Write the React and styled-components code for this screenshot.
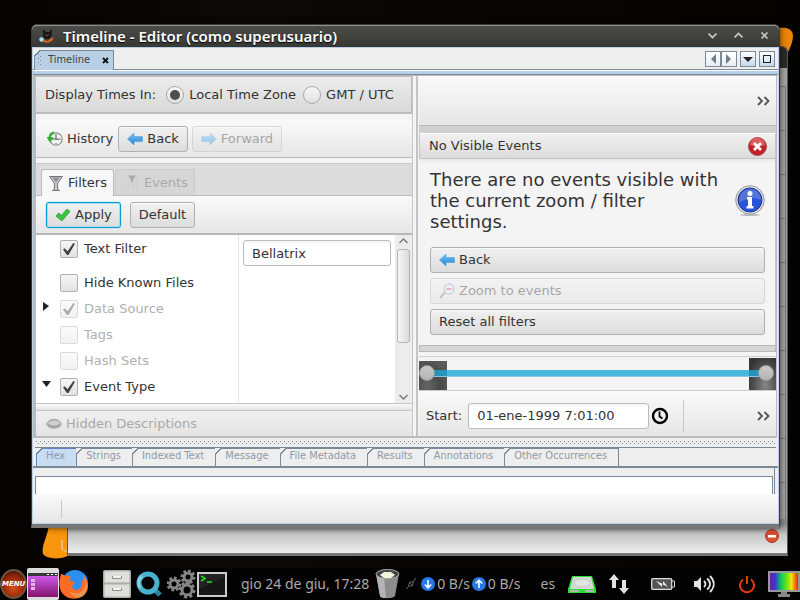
import React from "react";
import styled, { createGlobalStyle, css } from "styled-components";

const SANS = '"DejaVu Sans", sans-serif';
const CONDENSED = '"DejaVu Sans Condensed", "DejaVu Sans", sans-serif';
const HUMANIST = '"Noto Sans", "Open Sans", sans-serif';
const SLATE = "#7a8a99";

const GlobalStyle = createGlobalStyle`
  *, *::before, *::after { box-sizing: border-box; }
  body { margin: 0; background: #080504; }
  button, input { font: inherit; color: inherit; margin: 0; padding: 0; }
  button { border: 0; background: none; }
  svg { display: block; flex: none; }
`;

/* ---------- desktop ---------- */
const Desktop = styled.div`
  position: relative;
  display: flex;
  flex-direction: column;
  min-height: 100vh;
  overflow: hidden;
  background: linear-gradient(90deg, #060403, #0c0806 30%, #080504 70%, #050302);
  color: #333;
  font: 13px/16px ${SANS};
`;
const Workspace = styled.div`
  flex: 1;
  padding: 24px 20px 40px 31px;
`;
const Wallpaper = styled.svg`
  position: absolute;
  ${(p) => p.$place}
`;
const BackWindow = styled.div`
  position: absolute;
  top: 46px;
  bottom: 44px;
  left: 67px;
  right: 12px;
  display: flex;
  flex-direction: column;
  border: 1px solid #555;
  border-bottom: 3px solid #777;
  border-radius: 6px 6px 0 0;
  background: #a3a3a5;
`;
const BackTitle = styled.div`
  height: 21px;
  border-radius: 5px 5px 0 0;
  background: #292928;
`;
const BackBody = styled.div`
  flex: 1;
  margin: 18px 1px 0 0;
  border: 1px solid #77777a;
  border-width: 1px 1px 0 0;
  background: repeating-linear-gradient(#a3a3a5 0 43px, #77777a 43px 44px);
`;
const BackStatus = styled.div`
  display: flex;
  align-items: center;
  justify-content: flex-end;
  height: 34px;
  padding: 0 8px 0 0;
  background: linear-gradient(#888 15%, #c4c4c4 45%, #efefef);
`;

/* ---------- window ---------- */
const Window = styled.main`
  position: relative;
  display: flex;
  flex-direction: column;
  border: 1px solid #3b3b39;
  border-bottom: 4px solid #777;
  border-radius: 6px 6px 0 0;
  background: #eee;
  box-shadow: 0 0 6px #000a;
`;
const TitleBar = styled.header`
  display: flex;
  align-items: center;
  height: 22px;
  padding: 0 6px 2px 7px;
  gap: 8px;
  border-top: 1px solid #8f8f8b;
  border-radius: 5px 5px 0 0;
  background: linear-gradient(#4b4b48, #373734);
  h1 {
    flex: 1;
    margin: 0;
    color: #fff;
    font: 600 15px/18px ${HUMANIST};
    text-shadow: 0 1px 1px #000;
  }
`;
const WindowButton = styled.button`
  display: grid;
  place-items: center;
  width: 18px;
  height: 18px;
`;
const WindowButtons = styled.div`
  display: flex;
  gap: 8px;
`;
const Frame = styled.div`
  border: 1px solid #b8cfe5;
`;
const DocTabs = styled.div`
  display: flex;
  align-items: flex-end;
  justify-content: space-between;
  height: 22px;
  padding-left: 1px;
  border-bottom: 1px solid ${SLATE};
`;
const cutCorner = css`
  position: relative;
  &::before {
    content: "";
    position: absolute;
    top: -1px;
    left: -1px;
    width: 6px;
    height: 6px;
    background: linear-gradient(135deg, #eee 45%, ${(p) => (p.$active ? "#6382bf" : SLATE)} 45% 60%, transparent 60%);
  }
`;
const DocTab = styled.div`
  ${cutCorner}
  display: flex;
  align-items: center;
  gap: 12px;
  height: 20px;
  margin-bottom: -1px;
  padding: 0 4px 1px 3px;
  border: 1px solid ${SLATE};
  border-bottom: 0;
  background: #b8cfe5;
  font: 11px/18px ${CONDENSED};
  color: #444;
  button { display: grid; }
`;
const Grip = styled.i`
  width: 4px;
  height: 12px;
  margin-right: -6px;
  background:
    conic-gradient(from 270deg at 1px 1px, #7088a0 90deg, transparent 0) 0 0 / 4px 4px,
    conic-gradient(from 270deg at 1px 1px, #7088a0 90deg, transparent 0) 2px 2px / 4px 4px;
`;
const DocNav = styled.div`
  display: flex;
  height: 18px;
  padding-right: 3px;
`;
const NavButton = styled.button`
  display: grid;
  place-items: center;
  width: 16px;
  height: 16px;
  border: 1px solid ${SLATE};
  background: linear-gradient(#fff, ${(p) => (p.$lit ? "#c3d8ee" : "#e9edf1")});
  margin-left: ${(p) => (p.$spaced ? 3 : 0)}px;
`;
const BlueRule = styled.div`
  height: 5px;
  border-top: 1px solid #fff;
  border-bottom: 1px solid ${SLATE};
  background: #b8cfe5;
`;
const Body = styled.div`
  display: grid;
  grid-template-columns: 376fr 6px 358fr;
  margin-right: 1px;
  border: 1px solid #bbb;
  border-width: 1px 1px 2px 3px;
  background: #f4f4f4;
`;
const Divider = styled.div`
  border: 1px solid #c4c4c4;
  border-width: 0 2px 0 1px;
  background: #f5f5f5;
`;
const Column = styled.section`
  display: flex;
  flex-direction: column;
  min-width: 0;
  padding-left: ${(p) => (p.$inset ? 1 : 0)}px;
`;
const Bar = styled.div`
  display: flex;
  align-items: center;
  height: ${(p) => p.$h || 38}px;
  padding: 0 ${(p) => p.$right || 10}px 0 10px;
  gap: ${(p) => p.$gap || 0}px;
  border-bottom: 1px solid #b8b8b8;
  background: linear-gradient(#fafafa, #e6e6e6);
`;
const TimesBar = styled.div`
  display: flex;
  align-items: center;
  height: 38px;
  margin: 0 0 6px;
  padding: 0 9px;
  border: 1px solid #bdbdbd;
  border-width: 1px 1px 2px 0;
  background: linear-gradient(#ececec, #d9d9d9);
`;
const TimesLabel = styled.span`
  margin-right: 10px;
`;
const RadioLabel = styled.label`
  display: flex;
  align-items: center;
  gap: 5px;
  margin-right: 7px;
`;
const Radio = styled.input.attrs({ type: "radio" })`
  appearance: none;
  display: grid;
  place-items: center;
  width: 18px;
  height: 18px;
  border: 1px solid #a8a8a8;
  border-radius: 50%;
  background: linear-gradient(#f8f8f8, #e0e0e0);
  &:checked::before {
    content: "";
    width: 10px;
    height: 10px;
    border-radius: 50%;
    background: #4d4d4d;
  }
`;
const Check = styled.input.attrs({ type: "checkbox" })`
  appearance: none;
  display: grid;
  place-items: center;
  width: 18px;
  height: 18px;
  border: 1px solid #b0b0b0;
  border-radius: 2px;
  background: linear-gradient(#f6f6f6, #e2e2e2);
  &:checked::before {
    content: "";
    width: 12px;
    height: 12px;
    background: #444;
    clip-path: polygon(0 55%, 14% 43%, 38% 68%, 86% 0, 100% 6%, 46% 100%, 33% 100%);
  }
  &:disabled { opacity: 0.45; }
`;
const Button = styled.button`
  display: flex;
  align-items: center;
  justify-content: flex-start;
  gap: 4px;
  height: 26px;
  padding: 0 8px;
  border: 1px solid #b0b0b0;
  border-radius: 3px;
  background: linear-gradient(#f1f1f1, #dcdcdc);
  box-shadow: inset 0 1px #fafafa;
  white-space: nowrap;
  &:disabled { opacity: 0.4; }
  ${(p) =>
    p.$focused &&
    css`
      border-color: #039ed3;
      box-shadow: inset 0 0 0 1px #a5dcf0, 0 0 1px #039ed3;
    `}
`;
const HistoryLabel = styled.span`
  display: flex;
  align-items: center;
  gap: 4px;
  margin-left: 1px;
  margin-right: 1px;
`;
const FilterTabs = styled.div`
  display: flex;
  align-items: flex-end;
  height: 33px;
  margin-top: 5px;
  padding-left: 5px;
  gap: 1px;
  border-top: 1px solid #c8c8c8;
  border-bottom: 1px solid #bdbdbd;
  background: #dcdcdc;
`;
const FilterTab = styled.button`
  display: flex;
  align-items: center;
  gap: 5px;
  height: ${(p) => (p.disabled ? 26 : 27)}px;
  margin-bottom: ${(p) => (p.disabled ? 0 : -1)}px;
  padding: 0 6px 0 7px;
  border: 1px solid #bbb;
  border-bottom: 0;
  border-radius: 3px 3px 0 0;
  background: ${(p) => (p.disabled ? "#d2d2d2" : "#f7f7f7")};
  &:disabled { opacity: 0.5; color: #777; }
`;
const FilterArea = styled.div`
  display: grid;
  grid-template-columns: 203fr 156fr 17px;
  height: 169px;
  border-top: 1px solid #b8b8b8;
  background: #fff;
`;
const FilterList = styled.ul`
  margin: 0;
  padding: 1px 0 0 6px;
  border-right: 1px solid #e6e6e6;
  list-style: none;
`;
const FilterRow = styled.li`
  display: grid;
  grid-template-columns: 18px 1fr;
  align-items: center;
  height: 26px;
  &:first-child { margin-bottom: 8px; }
  label {
    display: flex;
    align-items: center;
    gap: 6px;
    color: ${(p) => (p.$off ? "#b0b0b0" : "#333")};
  }
`;
const Disclosure = styled.button`
  display: grid;
  width: 10px;
  padding-bottom: 4px;
`;
const FilterValue = styled.div`
  padding: 5px 4px;
`;
const TextBox = styled.input`
  width: ${(p) => p.$w || "100%"};
  min-width: 0;
  height: 26px;
  padding: 0 8px;
  border: 1px solid #bcbcbc;
  border-radius: 3px;
  background: linear-gradient(#f3f3f3, #fff 4px);
`;
const ScrollBar = styled.div`
  display: flex;
  flex-direction: column;
  align-items: center;
  justify-content: space-between;
  padding: 3px 1px;
  background: #ececec;
`;
const ScrollThumb = styled.div`
  width: 13px;
  height: 94px;
  margin: 5px 0 auto;
  border: 1px solid #b5b5b5;
  border-radius: 3px;
  background: linear-gradient(90deg, #f5f5f5, #dadada);
`;
const HSplit = styled.div`
  height: 8px;
  border-top: 1px solid #c4c4c4;
  border-bottom: 1px solid #c4c4c4;
  background: linear-gradient(#fafafa, #e4e4e4);
`;
const HiddenBar = styled.div`
  display: flex;
  align-items: center;
  gap: 4px;
  flex: 1;
  min-height: 25px;
  padding-left: 10px;
  background: linear-gradient(#f0f0f0, #e4e4e4);
  color: #a8a8a8;
`;
const Overflow = styled.button`
  display: grid;
  margin-left: auto;
`;
const TimeButton = styled.button`
  display: grid;
  margin-left: 2px;
`;
const NoticeArea = styled.div`
  padding-top: 7px;
  background: #d0d0d0;
`;
const NoticeHead = styled.div`
  display: flex;
  align-items: center;
  justify-content: space-between;
  height: 26px;
  padding: 0 8px 0 9px;
  border: 1px solid #c4c4c4;
  border-top-color: #fff;
  background: linear-gradient(#f1f1f1, #dcdcdc);
`;
const NoticeBody = styled.div`
  display: flex;
  flex-direction: column;
  gap: 5px;
  min-height: 186px;
  padding: 10px 10px 10px 11px;
  border-right: 1px solid #c4c4c4;
  background: linear-gradient(#e9e9e9, #f4f4f4 5px);
`;
const NoticeText = styled.div`
  display: flex;
  align-items: center;
  justify-content: space-between;
  padding-bottom: 10px;
  p {
    max-width: 292px;
    margin: 0;
    font-size: 18px;
    line-height: 21px;
  }
`;
const NoticeFoot = styled.div`
  height: 7px;
  border: 1px solid #b8b8b8;
  background: #d6d6d6;
`;
const RangeArea = styled.div`
  display: grid;
  grid-template-columns: 28px 1fr 27px;
  grid-template-rows: 32px;
  align-items: end;
  margin-top: 4px;
  padding-top: 1px;
  border-top: 1px solid #d0d0d0;
  background: #f4f4f4;
`;
const RangeShade = styled.div`
  height: ${(p) => (p.$tall ? 32 : 29)}px;
  grid-column: ${(p) => (p.$tall ? 3 : 1)};
  grid-row: 1;
  background: ${(p) =>
    p.$tall
      ? "radial-gradient(ellipse at 60% 85%, #888, #555 45%, transparent 80%), #343434"
      : "radial-gradient(ellipse at 30% 85%, #666, #484848 45%, transparent 80%), #5a5a5a"};
`;
const RangeTrack = styled.div`
  grid-column: 1 / -1;
  grid-row: 1;
  align-self: center;
  height: 7px;
  margin: 0 17px 2px 14px;
  border-bottom: 1px solid #8bc6dc;
  background: #1ca8d8cc;
`;
const RangeInput = styled.input.attrs({ type: "range" })`
  appearance: none;
  grid-column: 1 / -1;
  grid-row: 1;
  align-self: center;
  width: 100%;
  height: 16px;
  margin-bottom: 2px;
  padding-right: 2px;
  background: none;
  pointer-events: none;
  &::-webkit-slider-thumb {
    appearance: none;
    width: 16px;
    height: 16px;
    border: 1px solid #999;
    border-radius: 50%;
    background: linear-gradient(#c9c9c9, #b4b4b4);
    pointer-events: auto;
  }
`;
const StartBar = styled(Bar)`
  flex: 1;
  min-height: 46px;
  padding: 4px 6px 0 7px;
  border-top: 1px solid #ccc;
  border-bottom: 0;
  label { margin-right: 6px; }
`;
const Separator = styled.i`
  width: 1px;
  height: ${(p) => p.$h}px;
  margin-left: ${(p) => p.$left}px;
  background: #c8c8c8;
`;
const DotRule = styled.div`
  height: 10px;
  margin: 0 2px;
  padding: 3px 1px 2px;
  border-bottom: 1px solid ${SLATE};
  background:
    conic-gradient(from 270deg at 1px 1px, #7f8a94 90deg, transparent 0) 0 0 / 4px 4px content-box,
    conic-gradient(from 270deg at 1px 1px, #7f8a94 90deg, transparent 0) 2px 2px / 4px 4px content-box;
`;
const ContentTabs = styled.div`
  display: flex;
  align-items: flex-end;
  height: 20px;
  padding-left: 3px;
  border-bottom: 2px solid ${SLATE};
`;
const ContentTab = styled.button`
  ${cutCorner}
  height: 18px;
  margin-right: -1px;
  padding: 0 11px 3px 9px;
  border: 1px solid ${(p) => (p.$active ? "#6382bf" : SLATE)};
  border-bottom: 0;
  background: ${(p) => (p.$active ? "#c8ddf2" : "#eee")};
  color: #8e9aa6;
  font: 11px/14px ${CONDENSED};
`;
const ContentPane = styled.div`
  height: 26px;
  margin: 0 3px 0 2px;
  padding-top: 8px;
  border-right: 1px solid ${SLATE};
  background: #eee;
  &::after {
    content: "";
    display: block;
    height: 18px;
    border: 1px solid ${SLATE};
    border-bottom: 0;
    background: #fff;
    margin-right: 1px;
  }
`;
const StatusStrip = styled.div`
  display: flex;
  align-items: center;
  height: 29px;
  background: linear-gradient(#fafafa, #e6e6e6);
`;

/* ---------- taskbar ---------- */
const Taskbar = styled.footer`
  position: relative;
  display: flex;
  align-items: center;
  height: 32px;
  background: #030202;
  color: #aaa;
  font: 14px/20px ${HUMANIST};
  white-space: nowrap;
  overflow: hidden;
`;
const Group = styled.div`
  display: flex;
  align-items: center;
  gap: ${(p) => p.$gap || 0}px;
  margin-left: ${(p) => p.$left || 0}px;
`;
const Launcher = styled.button`
  display: grid;
`;

/* ---------- icons ---------- */
const Arrow = ({ flip }) => (
  <svg width="16" height="16" viewBox="0 0 16 16">
    <defs>
      <linearGradient id="arrowFill" x1="0" y1="0" x2="0" y2="1">
        <stop offset="0" stopColor="#7cc3f2" />
        <stop offset="1" stopColor="#1d83d3" />
      </linearGradient>
    </defs>
    <path
      transform={flip ? "translate(16 0) scale(-1 1)" : undefined}
      d="M.5 8 7 2v3.6h8.5v5H7V14z"
      fill="url(#arrowFill)"
      stroke="#4ba0dc"
      strokeWidth=".6"
    />
  </svg>
);
const HistoryIcon = () => (
  <svg width="16" height="16" viewBox="0 0 16 16">
    <circle cx="9" cy="8" r="6.2" fill="#f1f4f1" stroke="#8c948c" strokeWidth="1.2" />
    <path d="M9 3v5.2h4.5M9 12v1M4.5 8H9" stroke="#555" fill="none" />
    <path d="M7 1.5C4 2 2.700 4 2.600 7" stroke="#2fb52f" strokeWidth="2.200" fill="none" />
    <path d="M0 6.500h6L3.200 11z" fill="#22c322" stroke="#168a16" strokeWidth=".5" />
  </svg>
);
const FunnelIcon = () => (
  <svg width="14" height="16" viewBox="0 0 14 16">
    <path d="M.5 1.500h13L8.600 8v6.500l1.900 1h-7l1.900-1V8z" fill="#c9c9cf" stroke="#73737a" />
    <path d="M3 2.500h8L7 7z" fill="#8d8d94" />
  </svg>
);
const EventsIcon = () => (
  <svg width="16" height="16" viewBox="0 0 16 16">
    <path d="M1.500 7.500v7h2v-7zM5.500 5.500v9h2v-9zM9.500 7.500v7h1v-7zM13 3.500v11h1.500v-11z" fill="#ddd" stroke="#c4c4c4" />
    <path d="M5 .5h8L10 5v2H8V5z" fill="#777" />
  </svg>
);
const TickIcon = () => (
  <svg width="16" height="14" viewBox="0 0 16 14">
    <path d="M1 8l3-3 2.500 2.500L12 1l3 2.500L6.800 13z" fill="#3bc53b" stroke="#1c8f2a" strokeWidth=".7" />
  </svg>
);
const MagnifierIcon = () => (
  <svg width="16" height="16" viewBox="0 0 16 16">
    <path d="M1 15l5-5.500" stroke="#888" strokeWidth="2.500" />
    <circle cx="10" cy="6" r="5" fill="#dfe8f8" stroke="#7182b8" />
    <path d="M7.500 6h5" stroke="#d23" strokeWidth="1.500" />
  </svg>
);
const CloseBadge = () => (
  <svg width="19" height="19" viewBox="0 0 19 19">
    <circle cx="9.500" cy="9.500" r="9" fill="#c2202b" stroke="#a84a50" />
    <path d="M2 8a7.500 7.500 0 0 1 15 0c-4 2-10 2-15 0z" fill="#db5a5f" />
    <path d="M6 6l7 7M13 6l-7 7" stroke="#fff" strokeWidth="2.800" />
  </svg>
);
const InfoBadge = () => (
  <svg width="30" height="31" viewBox="0 0 30 31">
    <ellipse cx="15" cy="30" rx="10" ry="1" fill="#bbb" />
    <circle cx="15" cy="15" r="14.300" fill="#dedede" stroke="#9a9a9a" />
    <circle cx="15" cy="15" r="12" fill="#2854d8" stroke="#173a9c" />
    <path d="M4 15a11 11 0 0 1 22 0c-7-3-15-2-22 3z" fill="#5674d6" />
    <path d="M12 12h5v9h1.500v2.500h-7V21H13v-6.500h-1z" fill="#fff" />
    <circle cx="15" cy="8.500" r="2.500" fill="#fff" />
  </svg>
);
const Chevrons = () => (
  <svg width="13" height="10" viewBox="0 0 13 10" fill="none" stroke="#555" strokeWidth="1.800">
    <path d="M1 1l4 4-4 4M7.500 1l4 4-4 4" />
  </svg>
);
const ClockIcon = () => (
  <svg width="18" height="18" viewBox="0 0 18 18" fill="none" stroke="#000">
    <circle cx="9" cy="9" r="7" strokeWidth="2.400" />
    <path d="M8.500 4.500V9.500l3 2" strokeWidth="1.800" />
  </svg>
);
const EyeIcon = () => (
  <svg width="16" height="12" viewBox="0 0 16 12">
    <path d="M0 6C3-1 13-1 16 6 13 12.500 3 12.500 0 6z" fill="#b0b0b0" />
    <path d="M2 5c3-3 9-3 12 0-3 3-9 3-12 0z" fill="#cfcfcf" />
    <path d="M2 7c3 2.500 9 2.500 12 0" stroke="#999" fill="none" />
  </svg>
);
const SmallChevron = ({ up }) => (
  <svg width="9" height="6" viewBox="0 0 9 6" fill="none" stroke="#777" strokeWidth="1.400">
    <path d={up ? "M.5 5 4.500 1l4 4" : "M.5 1l4 4 4-4"} />
  </svg>
);
const TitleGlyph = ({ d }) => (
  <svg width="9" height="9" viewBox="0 0 9 9" fill="none" stroke="#c8c8c4" strokeWidth="1.700">
    <path d={d} />
  </svg>
);
const DogIcon = () => (
  <svg width="16" height="16" viewBox="0 0 16 16">
    <path d="M4 1l3 3h3l3-3-.5 7-2.500 3H6L4 8z" fill="#15171b" />
    <path d="M5 11l3 2 4-3 3-1-2 4-4 2-5-1z" fill="#c8651b" />
    <path d="M6 6l2 2 2-2" stroke="#8a4b22" fill="none" />
    <circle cx="2.500" cy="11.500" r="2.200" fill="#a9e2ee" />
  </svg>
);
const CloseX = () => (
  <svg width="7" height="7" viewBox="0 0 7 7" stroke="#111" strokeWidth="1.800">
    <path d="M1 1l5 5M6 1 1 6" />
  </svg>
);
const Solid = ({ d, fill, w = 10, h = 10 }) => (
  <svg width={w} height={h} viewBox={`0 0 ${w} ${h}`}>
    <path d={d} fill={fill} fillRule="evenodd" />
  </svg>
);

const MenuBadge = styled.span`
  display: grid;
  place-items: center;
  width: 27px;
  height: 30px;
  border: 2px solid #6b5543;
  border-radius: 50%;
  background: radial-gradient(circle at 50% 65%, #d84c12, #8a2407 60%, #2a1008);
  color: #fff;
  font: italic 700 7px/10px ${SANS};
`;
const PurpleWindow = () => (
  <svg width="32" height="32" viewBox="0 0 32 32">
    <defs>
      <linearGradient id="purple" x1="0" y1="0" x2="0" y2="1">
        <stop offset="0" stopColor="#cc5ae8" />
        <stop offset="1" stopColor="#83146d" />
      </linearGradient>
    </defs>
    <rect width="32" height="32" rx="2" fill="#ddd" />
    <path d="M1 5h30v3H1z" fill="#383838" />
    <path d="M20 6h2v1h-2zM24 6h2v1h-2zM28 6h2v1h-2z" fill="#fff" />
    <path d="M1 8h30v21H1z" fill="url(#purple)" />
    <path d="M4 11h4v3H4zM4 15h4v3H4zM4 19h4v3H4z" fill="#e4b4e8" />
  </svg>
);
const Fox = () => (
  <svg width="30" height="30" viewBox="0 0 30 30">
    <circle cx="16" cy="14" r="13" fill="#2c8ff0" />
    <path d="M2 5c2 0 3 1 4 2 3-1 5 0 6 1-2 1-2 3 0 4l4 1c0 2-3 3-3 5 1 4 8 3 9 0 1-3 0-5 2-7V6c6 6 7 15 1 20-6 5-16 5-21-1-5-6-4-13-2-20z" fill="#ff6a26" />
    <path d="M24 6c4 6 3 13-2 17-5 3-9 1-11-1 1 6 9 9 14 4 5-6 3-15-1-20z" fill="#e99552" />
  </svg>
);
const Cabinet = () => (
  <svg width="28" height="28" viewBox="0 0 28 28">
    <rect width="28" height="28" rx="2" fill="#a8a8a5" />
    <path d="M1 1h26v12H1zM1 14h26v13H1z" fill="#dededb" stroke="#aaaaa7" />
    <path d="M9 6h10v3H9zM9 18h10v3H9z" fill="#f4f4f2" />
    <path d="M9.500 6v2.500h9V6M9.500 18v2.500h9V18" fill="none" stroke="#888" />
  </svg>
);
const SearchQ = () => (
  <svg width="26" height="26" viewBox="0 0 26 26">
    <path d="M18 18l6 6" stroke="#28839d" strokeWidth="5" />
    <circle cx="12" cy="12" r="9" fill="none" stroke="#49b1ce" strokeWidth="5" />
    <path d="M4 17a9 9 0 0 1 2-12" fill="none" stroke="#86cfe0" strokeWidth="3" />
  </svg>
);
const Gears = () => (
  <svg width="30" height="30" viewBox="0 0 30 30" fill="none" stroke="#858585">
    {[[7, 15, 4], [21, 8, 4], [20, 21, 5]].map(([x, y, r]) => (
      <g key={`${x}-${y}`}>
        <circle cx={x} cy={y} r={r} strokeWidth="3" />
        <circle cx={x} cy={y} r={r + 2} strokeWidth="3" pathLength="32" strokeDasharray="2.200 1.800" />
      </g>
    ))}
  </svg>
);
const Terminal = () => (
  <svg width="30" height="25" viewBox="0 0 30 25">
    <path d="M1 1h28v23H1z" fill="#222" stroke="#ccc" strokeWidth="2" />
    <path d="M2 17 28 5v18H2z" fill="#161616" />
    <path d="M4 4l4 2.500L4 9M10 10h5" stroke="#20dd20" strokeWidth="1.700" fill="none" />
  </svg>
);
const Bin = () => (
  <svg width="25" height="30" viewBox="0 0 25 30">
    <path d="M1 5l4 22c2 3 13 3 15 0l4-22z" fill="#8c8c8c" />
    <path d="M1 5l4 22c1 2 4 2 6 2L9 8z" fill="#b4b4b4" />
    <ellipse cx="12.500" cy="5" rx="11.500" ry="4.500" fill="#444" stroke="#aaa" />
    <path d="M5 6l4-3 7 0 4 3-4 3H9z" fill="#f6f4df" />
  </svg>
);
const Plug = () => (
  <svg width="10" height="12" viewBox="0 0 10 12" stroke="#666" fill="none">
    <path d="M0 11l3-3M7 4l3-4M3 4l4 4M3 8c-1-3 2-5 4-4 1 3-2 5-4 4z" />
  </svg>
);
const NetArrow = ({ up }) => (
  <svg width="14" height="14" viewBox="0 0 14 14">
    <circle cx="7" cy="7" r="7" fill="#2579e8" />
    <path d={up ? "M7 11V3.500M3.800 6.500 7 3.200l3.200 3.300" : "M7 3v7.500M3.800 7.500 7 10.800l3.200-3.300"} stroke="#fff" strokeWidth="1.600" fill="none" />
  </svg>
);
const Drive = () => (
  <svg width="30" height="19" viewBox="0 0 30 19">
    <path d="M5 1h20l4 13v4H1v-4z" fill="#2bdc35" />
    <path d="M6 2h18l3 12H3z" fill="#d5d8d5" />
    <ellipse cx="15" cy="8" rx="8" ry="4" fill="#e2e4e2" stroke="#c6c8c6" />
    <path d="M3 15h9v2H3zM18 15h9v2h-9z" fill="#aeb8ae" />
  </svg>
);
const Battery = () => (
  <svg width="24" height="12" viewBox="0 0 24 12">
    <rect x=".7" y=".7" width="20" height="10.600" rx="1" fill="#555" stroke="#ddd" strokeWidth="1.300" />
    <path d="M21 3h2.500v6H21" fill="none" stroke="#ddd" />
    <path d="M5 3l7 3V3l5 6-6-3v3z" fill="#eee" />
  </svg>
);
const Speaker = () => (
  <svg width="21" height="18" viewBox="0 0 21 18" fill="none" stroke="#e4e4e4" strokeWidth="1.800">
    <path d="M0 6h3l4-4v14l-4-4H0z" fill="#e4e4e4" stroke="none" />
    <path d="M10 6c2 2 2 4 0 6M13 3.500c4 3 4 8 0 11M16 1c5 5 5 11 0 16" />
  </svg>
);
const Power = () => (
  <svg width="16" height="17" viewBox="0 0 16 17" fill="none" stroke="#e8390b" strokeWidth="2">
    <path d="M4 3.500a7 7 0 1 0 8 0M8 0v8" />
  </svg>
);
const Monitor = () => (
  <svg width="32" height="26" viewBox="0 0 32 26">
    <defs>
      <linearGradient id="spectrum">
        <stop offset="0" stopColor="#7a18a0" />
        <stop offset=".2" stopColor="#3638d0" />
        <stop offset=".4" stopColor="#10c860" />
        <stop offset=".6" stopColor="#70e510" />
        <stop offset=".75" stopColor="#f2e40a" />
        <stop offset=".88" stopColor="#f36a0c" />
        <stop offset="1" stopColor="#e01010" />
      </linearGradient>
    </defs>
    <path d="M1 1h30v19H1z" fill="url(#spectrum)" stroke="#999" strokeWidth="2" />
    <path d="M13 21h6v2h3v3H10v-3h3z" fill="#888" />
  </svg>
);

const FILTERS = [
  { label: "Text Filter", checked: true },
  { label: "Hide Known Files" },
  { label: "Data Source", checked: true, off: true, open: false },
  { label: "Tags", off: true },
  { label: "Hash Sets", off: true },
  { label: "Event Type", checked: true, open: true },
];
const CONTENT_TABS = ["Hex", "Strings", "Indexed Text", "Message", "File Metadata", "Results", "Annotations", "Other Occurrences"];

function FilterPanel() {
  return (
    <Column>
      <TimesBar role="radiogroup" aria-labelledby="times">
        <TimesLabel id="times">Display Times In:</TimesLabel>
        <RadioLabel><Radio name="zone" defaultChecked />Local Time Zone</RadioLabel>
        <RadioLabel><Radio name="zone" />GMT / UTC</RadioLabel>
      </TimesBar>
      <Bar $gap={4}>
        <HistoryLabel><HistoryIcon />History</HistoryLabel>
        <Button><Arrow />Back</Button>
        <Button disabled><Arrow flip />Forward</Button>
      </Bar>
      <FilterTabs role="tablist">
        <FilterTab role="tab" aria-selected="true"><FunnelIcon />Filters</FilterTab>
        <FilterTab role="tab" disabled><EventsIcon />Events</FilterTab>
      </FilterTabs>
      <Bar $gap={9}>
        <Button $focused><TickIcon />Apply</Button>
        <Button>Default</Button>
      </Bar>
      <FilterArea>
        <FilterList>
          {FILTERS.map((f) => (
            <FilterRow key={f.label} $off={f.off}>
              {f.open === undefined ? (
                <span />
              ) : (
                <Disclosure aria-label={f.label} aria-expanded={f.open}>
                  <Solid d={f.open ? "M0 1h9L4.500 7z" : "M1 0l6 4-6 5z"} fill="#222" />
                </Disclosure>
              )}
              <label><Check defaultChecked={f.checked} disabled={f.off} />{f.label}</label>
            </FilterRow>
          ))}
        </FilterList>
        <FilterValue><TextBox aria-label="Text Filter" defaultValue="Bellatrix" /></FilterValue>
        <ScrollBar>
          <SmallChevron up />
          <ScrollThumb />
          <SmallChevron />
        </ScrollBar>
      </FilterArea>
      <HSplit />
      <HiddenBar><EyeIcon />Hidden Descriptions</HiddenBar>
    </Column>
  );
}

function EventsPanel() {
  return (
    <Column $inset>
      <Bar $h={50} $right={6}><Overflow aria-label="More tools"><Chevrons /></Overflow></Bar>
      <NoticeArea>
        <NoticeHead>No Visible Events<CloseBadge /></NoticeHead>
        <NoticeBody>
          <NoticeText>
            <p>There are no events visible with the current zoom / filter settings.</p>
            <InfoBadge />
          </NoticeText>
          <Button><Arrow />Back</Button>
          <Button disabled><MagnifierIcon />Zoom to events</Button>
          <Button>Reset all filters</Button>
        </NoticeBody>
        <NoticeFoot />
      </NoticeArea>
      <RangeArea>
        <RangeShade />
        <RangeShade $tall />
        <RangeTrack />
        <RangeInput aria-label="Range start" defaultValue="0" />
        <RangeInput aria-label="Range end" defaultValue="100" />
      </RangeArea>
      <StartBar>
        <label htmlFor="start">Start:</label>
        <TextBox id="start" $w="181px" defaultValue="01-ene-1999 7:01:00" />
        <TimeButton aria-label="Pick time"><ClockIcon /></TimeButton>
        <Separator $h={32} $left={14} />
        <Overflow aria-label="More options"><Chevrons /></Overflow>
      </StartBar>
    </Column>
  );
}

export default function App() {
  return (
    <Desktop>
      <GlobalStyle />
      <Wallpaper $place="top: 26px; right: 5px;" width="20" height="40" viewBox="0 0 20 40">
        <path d="M0 3C10 0 18 2 18 10s-6 18-10 26H0z" fill="#e88408" />
      </Wallpaper>
      <Wallpaper $place="bottom: 41px; left: 40px;" width="32" height="36" viewBox="0 0 32 36">
        <path d="M9 0h23v30C25 37 8 37 3 31 1 22 8 14 9 0z" fill="#f8950d" />
        <path d="M22 17v8c0 3 3 3 6 3" stroke="#ddd" fill="none" />
      </Wallpaper>
      <BackWindow>
        <BackTitle />
        <BackBody />
        <BackStatus>
          <svg width="14" height="14" viewBox="0 0 14 14">
            <circle cx="7" cy="7" r="6.500" fill="#dc4e32" stroke="#a33b28" />
            <path d="M3 6h8v2.500H3z" fill="#fff" />
          </svg>
        </BackStatus>
      </BackWindow>
      <Workspace>
        <Window>
          <TitleBar>
            <DogIcon />
            <h1>Timeline - Editor (como superusuario)</h1>
            <WindowButtons>
              <WindowButton aria-label="Minimize"><TitleGlyph d="M.5 2.500l4 4 4-4" /></WindowButton>
              <WindowButton aria-label="Maximize"><TitleGlyph d="M.5 6.500l4-4 4 4" /></WindowButton>
              <WindowButton aria-label="Close"><TitleGlyph d="M1.500 1.500l6 6M7.500 1.500l-6 6" /></WindowButton>
            </WindowButtons>
          </TitleBar>
          <Frame>
            <DocTabs>
              <DocTab>
                <Grip />
                <span>Timeline</span>
                <button aria-label="Close tab"><CloseX /></button>
              </DocTab>
              <DocNav>
                <NavButton aria-label="Previous"><Solid w={6} h={10} d="M6 0v10L1 5z" fill="#6d7e90" /></NavButton>
                <NavButton aria-label="Next"><Solid w={6} h={10} d="M0 0v10l5-5z" fill="#6d7e90" /></NavButton>
                <NavButton $lit $spaced aria-label="List"><Solid w={10} h={5} d="M0 0h10L5 5z" fill="#222" /></NavButton>
                <NavButton $lit $spaced aria-label="Maximize pane">
                  <Solid w={8} h={8} d="M0 0h8v8H0zM1 1v6h6V1z" fill="#222" />
                </NavButton>
              </DocNav>
            </DocTabs>
            <BlueRule />
            <Body>
              <FilterPanel />
              <Divider />
              <EventsPanel />
            </Body>
            <DotRule />
            <ContentTabs role="tablist">
              {CONTENT_TABS.map((t, i) => (
                <ContentTab key={t} role="tab" $active={i === 0}>{t}</ContentTab>
              ))}
            </ContentTabs>
            <ContentPane />
            <StatusStrip><Separator $h={18} $left={28} /></StatusStrip>
          </Frame>
        </Window>
      </Workspace>
      <Taskbar>
        <Launcher aria-label="Menu"><MenuBadge>MENU</MenuBadge></Launcher>
        <Launcher aria-label="Desktop"><PurpleWindow /></Launcher>
        <Launcher aria-label="Browser"><Fox /></Launcher>
        <Group $left={14} $gap={5}>
          <Launcher aria-label="Files"><Cabinet /></Launcher>
          <Launcher aria-label="Search"><SearchQ /></Launcher>
          <Group>
            <Launcher aria-label="Settings"><Gears /></Launcher>
            <Launcher aria-label="Terminal"><Terminal /></Launcher>
          </Group>
        </Group>
        <Group $left={14} $gap={6}>
          <time>gio 24 de giu, 17:28</time>
          <Bin />
          <Plug />
        </Group>
        <Group $left={5} $gap={2}>
          <NetArrow />0 B/s
          <NetArrow up />0 B/s
        </Group>
        <Group $left={20}>es</Group>
        <Group $left={12} $gap={12}>
          <Drive />
          <Solid w={20} h={20} d="M5 0l5 6H7v8H3V6H0zM15 20l-5-6h3V6h4v8h3z" fill="#e4e4e4" />
        </Group>
        <Group $left={22} $gap={19}><Battery /><Speaker /></Group>
        <Group $left={24} $gap={13}><Power /><Monitor /></Group>
      </Taskbar>
    </Desktop>
  );
}
